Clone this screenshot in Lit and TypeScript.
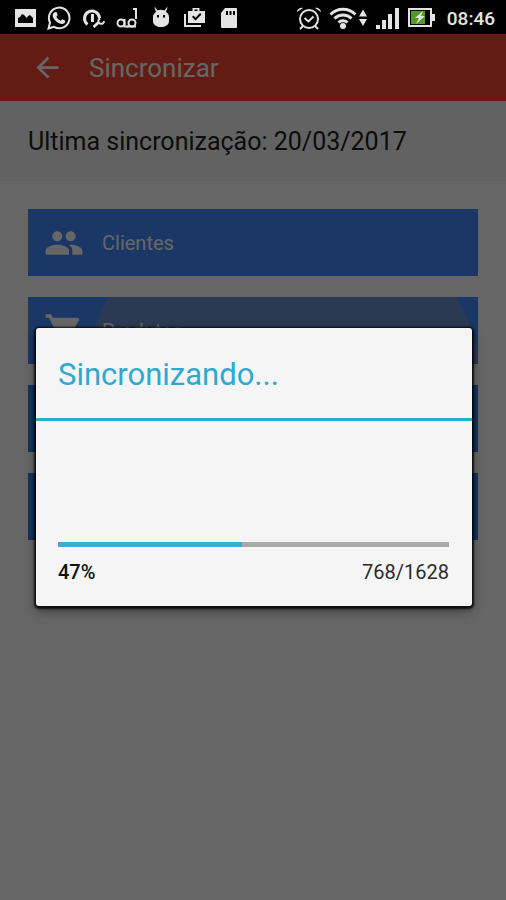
import { LitElement, html, css, svg, nothing } from "lit";
import { customElement, property, state } from "lit/decorators.js";

const people = svg`<path d="M16 11c1.66 0 2.99-1.34 2.99-3S17.66 5 16 5s-3 1.34-3 3 1.34 3 3 3zm-8 0c1.66 0 2.99-1.34 2.99-3S9.66 5 8 5 5 6.34 5 8s1.34 3 3 3zm0 2c-2.33 0-7 1.17-7 3.5V19h14v-2.5c0-2.33-4.67-3.5-7-3.5zm8 0c-.29 0-.62.02-.97.05 1.16.84 1.97 1.97 1.97 3.45V19h6v-2.5c0-2.33-4.67-3.5-7-3.5z"/>`;
const cart = svg`<path d="M7 18c-1.1 0-1.99.9-1.99 2S5.9 22 7 22s2-.9 2-2-.9-2-2-2zM1 2v2h2l3.6 7.59-1.35 2.45c-.16.28-.25.61-.25.96 0 1.1.9 2 2 2h12v-2H7.42c-.14 0-.25-.11-.25-.25l.03-.12.9-1.63h7.45c.75 0 1.41-.41 1.75-1.03l3.58-6.49c.08-.14.12-.31.12-.48 0-.55-.45-1-1-1H5.21l-.94-2H1zm16 16c-1.1 0-1.99.9-1.99 2s.89 2 1.99 2 2-.9 2-2-.9-2-2-2z"/>`;

@customElement("status-bar")
class StatusBar extends LitElement {
  static styles = css`
    :host {
      display: flex;
      justify-content: space-between;
      align-items: center;
      height: 34px;
      padding: 2px 11px 0 13px;
      box-sizing: border-box;
      background: #000;
      color: #e4e4e4;
      font-family: Roboto, sans-serif;
    }
    .group {
      display: flex;
      align-items: center;
      gap: 10px;
    }
    .right {
      gap: 7px;
    }
    .icon {
      display: block;
      height: 24px;
      fill: currentColor;
    }
    .line {
      fill: none;
      stroke: currentColor;
      stroke-width: 2;
    }
    .thick {
      stroke-width: 3;
    }
    time {
      font-size: 19px;
      line-height: 24px;
      font-weight: 500;
      margin: 2px 0 0 5px;
    }
  `;

  render() {
    return html`
      <div class="group">
        <svg class="icon" width="24" viewBox="0 0 24 24">
          <path fill-rule="evenodd" d="M2 3h21v18H2zM5 17h15v-5l-3-3-2 1-1 2-3-3-2-1-2 3-2 1z" />
        </svg>
        <svg class="icon" width="24" viewBox="0 0 24 24">
          <path class="line" d="M1.500 22.500l1.500-6A10.300 10.300 0 1 1 7 20.800z" />
          <path d="M7 6.500l2-.5c.6 0 .8.500 1.600 2.800.2.600-1 1.500-1.200 1.900.9 1.900 2.400 3.200 4.300 4 .4 0 1.200-1.500 1.700-1.500l2.600 1.200c.4.300.1 2.200-.7 2.800-1.300 1-3 .9-5.200 0C8.500 15.500 6 12 5.700 9.700c-.1-1.200.4-2.500 1.300-3.200z" />
        </svg>
        <svg class="icon" width="24" viewBox="0 0 24 24">
          <path class="line thick" d="M6.500 18.500A7.500 7.500 0 1 1 18.500 12" />
          <path d="M10 8h3v8h-3z" />
          <path class="line thick" d="M12.500 21l5-4.500" />
          <path class="line" d="M19 12.500c-2 1-2.500 4 0 5s4-.5 4-2.500" />
        </svg>
        <svg class="icon" width="24" viewBox="0 0 24 24">
          <g class="line">
            <circle cx="6" cy="17" r="3.500" />
            <path d="M9.500 13v7.500h4" />
            <circle cx="17" cy="17" r="3.500" />
            <path d="M18 3h3v10M12 20.500h9" />
          </g>
        </svg>
        <svg class="icon" width="24" viewBox="0 0 24 24">
          <path fill-rule="evenodd" d="M6 1l2.500 3.500a9 9 0 0 1 7 0L18 1l.5.5L17 6c2 1 3 3 3 5v4c0 4-4 6-8 6s-8-2-8-6v-4c0-2 1-4 3-5L5.500 1.500zM8 9v2.500h2V9zM14 9v2.500h2V9z" />
        </svg>
        <svg class="icon" width="24" viewBox="0 0 24 24">
          <path fill-rule="evenodd" d="M5 5h4.500V2h7v3H22v12H5zM11.500 5h3V3.500h-3zM9 11l3.500 3.500 6-6L17 7l-4.500 4.700-2-2.200zM1 8h2v11h15v2H1z" />
        </svg>
        <svg class="icon" width="24" viewBox="0 0 24 24">
          <path fill-rule="evenodd" d="M8 2h11q1 0 1 1v18q0 1-1 1H5q-1 0-1-1V7zM9 5v4h2V5zM12.500 5v4h2V5zM16 5v4h2V5z" />
        </svg>
      </div>
      <div class="group right">
        <svg class="icon" width="26" viewBox="0 0 26 24">
          <g class="line">
            <circle cx="13" cy="13" r="9" />
            <path d="M8.500 12l4 3.500 5-5M7 20l-3 3M19 20l3 3" />
          </g>
          <path d="M1 6c0-3 4-5 6-4zM25 6c0-3-4-5-6-4z" />
        </svg>
        <svg class="icon" width="38" viewBox="0 0 38 24">
          <path class="line thick" d="M1.500 8.500a17.500 17.500 0 0 1 25 0M5.500 12.500a12 12 0 0 1 17 0M9.500 16.500a6.500 6.500 0 0 1 9 0" />
          <circle cx="14" cy="20" r="3" />
          <path d="M30 10.500l4-7 4 7zM30 13l4 7 4-7z" />
        </svg>
        <svg class="icon" width="26" viewBox="0 0 26 24">
          <path d="M2 19h4v4H2zM8 14h4v9H8zM14 8h4v15h-4zM21 2h4v21h-4z" />
        </svg>
        <svg class="icon" width="28" viewBox="0 0 28 24">
          <path class="line" d="M2 3h22v17H2z" />
          <path d="M25 8h3v7h-3z" />
          <path fill="#4f9d25" d="M4 5h14v13H4z" />
          <path d="M16 5l-8 7h4l-3 6 9-8h-4z" />
        </svg>
        <time>08:46</time>
      </div>
    `;
  }
}

@customElement("sync-dialog")
class SyncDialog extends LitElement {
  @property({ type: Number }) done = 0;
  @property({ type: Number }) total = 1;

  static styles = css`
    :host {
      display: block;
      flex: 1;
      background: #f5f5f5;
      border-radius: 3px;
      box-shadow: 0 1px 2px 2px rgba(0, 0, 0, 0.8), 0 5px 12px rgba(0, 0, 0, 0.4);
      font-family: Roboto, sans-serif;
      overflow: hidden;
    }
    h2 {
      margin: 0;
      padding: 27px 22px 23px;
      font-size: 31px;
      line-height: 40px;
      font-weight: 400;
      color: #2fa9cf;
      border-bottom: 3px solid #26b0cf;
    }
    .body {
      padding: 121px 23px 21px 22px;
    }
    progress {
      display: block;
      appearance: none;
      width: 100%;
      height: 5px;
      border: 0;
      background: #a9a9a9;
    }
    progress::-webkit-progress-bar {
      background: #a9a9a9;
    }
    progress::-webkit-progress-value {
      background: #46a8cf;
    }
    .figures {
      display: flex;
      justify-content: space-between;
      margin-top: 12px;
      font-size: 20px;
      line-height: 26px;
      color: #2b2b2b;
    }
    .percent {
      font-weight: 500;
      color: #111;
    }
  `;

  render() {
    return html`
      <h2 id="title">Sincronizando...</h2>
      <div class="body">
        <progress aria-labelledby="title" value=${this.done} max=${this.total}></progress>
        <div class="figures">
          <span class="percent">${Math.floor((this.done / this.total) * 100)}%</span>
          <span>${this.done}/${this.total}</span>
        </div>
      </div>
    `;
  }
}

@customElement("app-root")
class AppRoot extends LitElement {
  @state() private entries = [
    { label: "Clientes", icon: people, tone: "" },
    { label: "Produtos", icon: cart, tone: "pressed" },
    { label: "", icon: nothing, tone: "deep" },
    { label: "", icon: nothing, tone: "deep" },
  ];

  static styles = css`
    :host {
      display: flex;
      flex-direction: column;
      min-height: 100vh;
      font-family: Roboto, sans-serif;
    }
    .screen {
      position: relative;
      flex: 1;
      display: flex;
      flex-direction: column;
      background: #fff;
    }
    header {
      display: flex;
      align-items: center;
      gap: 25px;
      height: 67px;
      padding: 0 31px;
      background: #f44633;
      color: #fff;
    }
    .back {
      padding: 0;
      border: 0;
      background: none;
      color: inherit;
    }
    .icon {
      display: block;
      fill: currentColor;
    }
    h1 {
      margin: 0;
      font-size: 26px;
      line-height: 32px;
      font-weight: 400;
    }
    .last {
      margin: 0;
      padding: 25px 28px 23px;
      font-size: 25px;
      line-height: 32px;
      color: #222;
      background: #f5f5f5;
    }
    .list {
      display: flex;
      flex-direction: column;
      gap: 21px;
      padding: 28px;
    }
    .entry {
      position: relative;
      overflow: hidden;
      display: flex;
      align-items: center;
      gap: 18px;
      height: 67px;
      padding: 0 16px;
      border: 0;
      background: #428aff;
      color: #fff;
      font: 400 20px/26px Roboto, sans-serif;
    }
    .deep {
      background: #3380e8;
    }
    .pressed::before {
      content: "";
      position: absolute;
      left: 12%;
      top: 0;
      width: 89%;
      aspect-ratio: 1;
      border-radius: 50%;
      transform: translateY(-25%);
      background: #6c90cf;
    }
    .entry > * {
      position: relative;
    }
    .scrim {
      position: absolute;
      inset: 0;
      display: flex;
      align-items: center;
      padding: 0 34px 0 36px;
      background: rgba(0, 0, 0, 0.6);
    }
  `;

  render() {
    return html`
      <status-bar></status-bar>
      <div class="screen">
        <header>
          <button class="back">
            <svg class="icon" width="33" height="33" viewBox="0 0 24 24">
              <path d="M20 11H7.830l5.590-5.590L12 4l-8 8 8 8 1.410-1.410L7.830 13H20v-2z" />
            </svg>
          </button>
          <h1>Sincronizar</h1>
        </header>
        <p class="last">Ultima sincronização: 20/03/2017</p>
        <main class="list">
          ${this.entries.map(
            (e) => html`<button class="entry ${e.tone}">
              <svg class="icon" width="40" height="40" viewBox="0 0 24 24">${e.icon}</svg>
              <span>${e.label}</span>
            </button>`
          )}
        </main>
        <div class="scrim">
          <sync-dialog role="dialog" .done=${768} .total=${1628}></sync-dialog>
        </div>
      </div>
    `;
  }
}
